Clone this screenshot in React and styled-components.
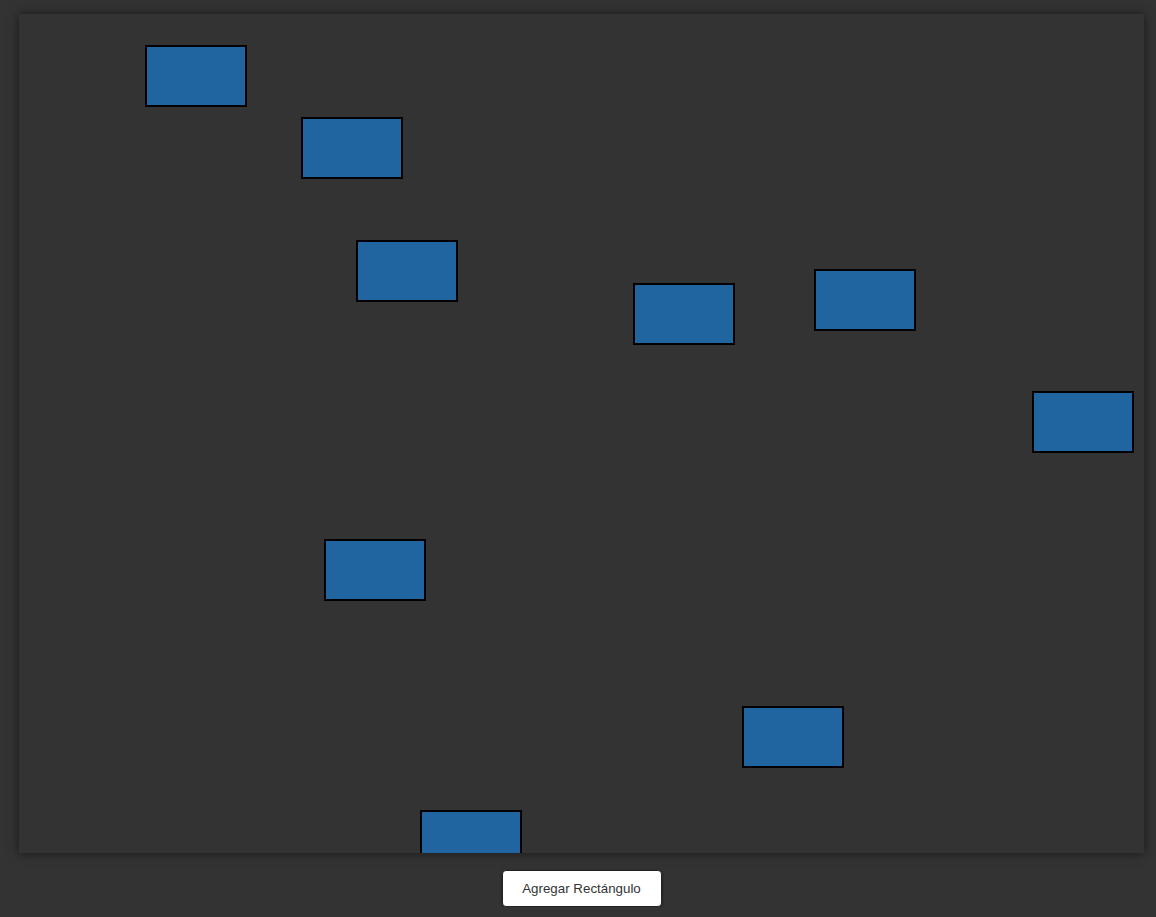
import styled, { createGlobalStyle } from 'styled-components';

const rects = [
  { x: 126, y: 31 },
  { x: 282, y: 103 },
  { x: 337, y: 226 },
  { x: 614, y: 269 },
  { x: 795, y: 255 },
  { x: 1013, y: 377 },
  { x: 305, y: 525 },
  { x: 723, y: 692 },
  { x: 401, y: 796 },
];

const GlobalStyle = createGlobalStyle`
  html, body {
    margin: 0;
    background: #333333;
    font-family: "Liberation Sans", Arial, sans-serif;
  }
`;

const Page = styled.div`
  width: 1125px;
  padding: 14px 0 0 19px;
  display: flex;
  flex-direction: column;
  align-items: center;
  gap: 17px;
`;

const Board = styled.div`
  position: relative;
  width: 1125px;
  height: 839px;
  background: #333333;
  overflow: hidden;
  box-shadow: 0 0 10px rgba(0, 0, 0, 0.55);
`;

// los rectangulos van sobre el lienzo, su posicion es el contenido
const Rect = styled.div`
  position: absolute;
  left: ${(p) => p.$x}px;
  top: ${(p) => p.$y}px;
  width: 102px;
  height: 62px;
  box-sizing: border-box;
  background: #2165a0;
  border: 2px solid #000;
`;

const AddButton = styled.button`
  width: 160px;
  height: 37px;
  background: #fff;
  border: 1px solid #222;
  border-radius: 4px;
  box-shadow: 0 1px 3px rgba(0, 0, 0, 0.5);
  font-family: "Liberation Sans", Arial, sans-serif;
  font-size: 13.333px;
  color: #333;
  cursor: pointer;
`;

const App = () => {
  return (
    <>
      <GlobalStyle />
      <Page>
        <Board>
          {rects.map((r, i) => (
            <Rect key={i} $x={r.x} $y={r.y} />
          ))}
        </Board>
        <AddButton>Agregar Rectángulo</AddButton>
      </Page>
    </>
  );
};

export default App;
